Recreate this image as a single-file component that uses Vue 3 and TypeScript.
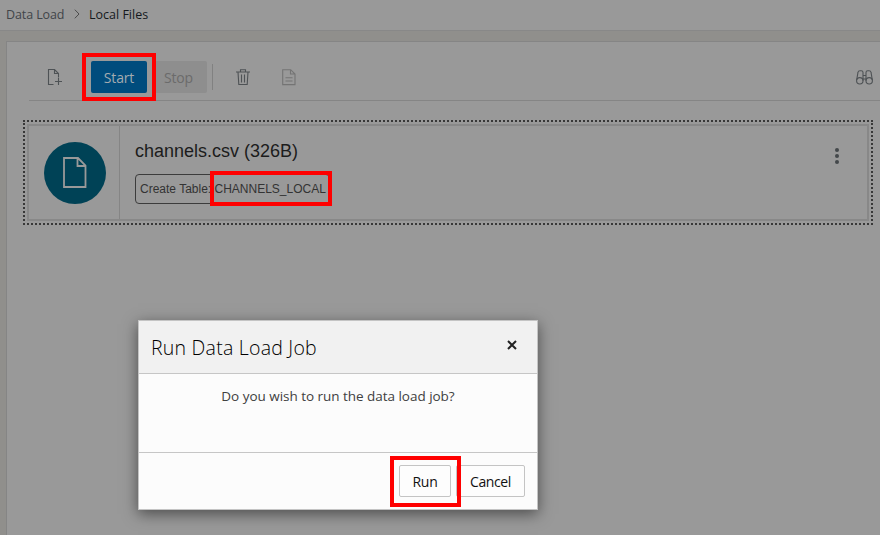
<script setup lang="ts">
import { ref } from 'vue'

interface LoadFile {
  name: string
  size: string
  table: string
}

const file = ref<LoadFile>({ name: 'channels.csv', size: '326B', table: 'CHANNELS_LOCAL' })
</script>

<template>
  <div class="app">
    <nav class="crumbs">
      <span class="crumb">Data Load</span>
      <svg class="chev" width="6" height="10" viewBox="0 0 6 10"><path d="M.8.7 5 5 .8 9.3" /></svg>
      <span class="crumb current">Local Files</span>
    </nav>

    <main class="panel">
      <div class="toolbar">
        <svg class="icon add" width="16" height="18" viewBox="0 0 16 18">
          <path d="M6.5 15.5h-5V.5h6l4 4v4M7.5.5v4h4M11.5 9v7M8 12.5h7" />
        </svg>
        <div class="start-wrap">
          <button class="btn start">Start</button>
          <i class="mark mark-start"></i>
        </div>
        <button class="btn stop">Stop</button>
        <i class="sep"></i>
        <svg class="icon trash" width="14" height="17" viewBox="0 0 14 17">
          <path d="M0 3h14M4.5 3V.8h5V3M2 3l.8 12.5h8.4L12 3M5.5 5.5v8M8.5 5.5v8" />
        </svg>
        <svg class="icon doc" width="14" height="17" viewBox="0 0 14 17">
          <path d="M.7.7h8L13 5v10.6H.7ZM8.5.7V5H13M3.5 8.7h7M3.5 12h7" />
        </svg>
        <svg class="icon bino" width="17" height="15" viewBox="0 0 17 15">
          <circle cx="3.8" cy="10.8" r="3.2" />
          <circle cx="13.2" cy="10.8" r="3.2" />
          <path d="M.7 10 2 2.2Q2.2.7 4 .7h1.3Q7 .7 7 2.4v8.4M16.3 10 15 2.2Q14.8.7 13 .7h-1.3Q10 .7 10 2.4v8.4M7 5.5h3M7 9h3" />
        </svg>
      </div>

      <section class="focus">
        <div class="card">
          <div class="thumb">
            <div class="disc">
              <svg width="24" height="31" viewBox="0 0 24 31">
                <path d="M1 1h14l7.5 7.5V30H1ZM14.5 1v8h8" />
              </svg>
            </div>
          </div>
          <div class="info">
            <h2 class="name">{{ file.name }} ({{ file.size }})</h2>
            <div class="chip">
              <span>Create Table: {{ file.table }}</span>
              <i class="mark mark-table"></i>
            </div>
          </div>
          <div class="more"><i></i><i></i><i></i></div>
        </div>
      </section>
    </main>

    <div class="dialog" role="dialog">
      <header class="d-head">
        <h1 class="d-title">Run Data Load Job</h1>
        <svg class="close" width="10" height="10" viewBox="0 0 10 10"><path d="m1 1 8 8M9 1 1 9" /></svg>
      </header>
      <div class="d-body"><span class="question">Do you wish to run the data load job?</span></div>
      <footer class="d-foot">
        <div class="run-wrap">
          <button class="d-btn run">Run</button>
          <i class="mark mark-run"></i>
        </div>
        <button class="d-btn cancel">Cancel</button>
      </footer>
    </div>
  </div>
</template>

<style>
body { margin: 0; overflow: hidden; }
</style>

<style scoped>
* { box-sizing: border-box; }
.app {
  position: relative;
  width: 880px;
  height: 535px;
  overflow: hidden;
  display: flex;
  flex-direction: column;
  background: #908f8c;
  font-family: "Open Sans", "Noto Sans", sans-serif;
}
button { font-family: inherit; padding: 0; margin: 0; white-space: nowrap; }
svg { fill: none; flex: none; display: block; }
.crumbs {
  height: 31px;
  flex: none;
  display: flex;
  align-items: center;
  padding: 0 0 2px 6px;
  background: #999;
  border-bottom: 1px solid #888;
  font-size: 12.5px;
  color: #414549;
}
.crumb { width: 59px; white-space: nowrap; letter-spacing: -.1px; }
.current { color: #15191d; letter-spacing: 0; width: 70px; }
.chev { margin: 0 9px 0 9px; stroke: #4c4c4c; }
.panel {
  flex: 1;
  margin: 10px 0 0 6px;
  background: #999;
  border: solid #858585;
  border-width: 1px 0 0 1px;
  padding-left: 16px;
}
.toolbar {
  height: 59px;
  margin-left: 6px;
  padding: 0 7px 0 18px;
  display: flex;
  align-items: center;
  border-bottom: 1px solid #858585;
  margin-bottom: 19px;
}
.icon { stroke: #4e5255; stroke-width: 1.1; }
.start-wrap, .run-wrap { position: relative; }
.start-wrap { margin: 12px 0 0 28px; height: 32px; }
.icon.add { margin-top: 13px; }
.btn { height: 32px; border: 0; border-radius: 2px; font-size: 14px; letter-spacing: -.15px; display: block; }
.start { width: 56px; background: #004c7d; color: #a3abb0; padding-top: 1px; }
.stop { width: 52px; margin: 12px 0 0 8px; background: #8e8e8e; color: #6b6b6b; padding: 1px 5px 0 0; }
.sep { width: 1px; height: 26px; background: #818181; margin: 12px 0 0 5px; }
.trash { margin: 13px 0 0 23px; }
.doc { margin: 13px 0 0 32px; stroke: #747474; }
.bino { margin: 13px 0 0 auto; }
.mark { position: absolute; border: 4px solid #f00; z-index: 2; }
.mark-start { left: -9px; top: -8px; width: 74px; height: 48px; }
.focus { width: 850px; height: 105px; border: 2px dotted #383838; padding: 2px; }
.card { height: 97px; width: 842px; border: 2px solid #888; display: flex; }
.thumb { width: 91px; padding-left: 2px; border-right: 1px solid #858585; display: flex; align-items: center; justify-content: center; flex: none; }
.disc { width: 62px; height: 62px; border-radius: 50%; background: #004256; display: flex; align-items: center; justify-content: center; }
.disc svg { stroke: #999; stroke-width: 1.8; }
.info { padding: 15px 0 0 15px; font-family: "Liberation Sans", Arial, sans-serif; }
.name { margin: 0; font-size: 18px; font-weight: 400; line-height: 20px; color: #1c1c1c; white-space: nowrap; }
.chip {
  position: relative;
  margin-top: 13px;
  width: 195px;
  height: 30px;
  padding-left: 4px;
  border: 1px solid #3c3c3c;
  border-radius: 4px;
  font-size: 12px;
  line-height: 28px;
  color: #333;
  white-space: nowrap;
}
.mark-table { left: 74px; top: -4px; width: 122px; height: 35px; }
.more { margin: 22px 28px 0 auto; display: flex; flex-direction: column; gap: 2px; }
.more i { width: 4px; height: 4px; border-radius: 50%; background: #44484b; }
.dialog {
  position: absolute;
  left: 138px;
  top: 320px;
  width: 400px;
  height: 190px;
  display: flex;
  flex-direction: column;
  background: #fcfcfc;
  border: 1px solid #c4c4c4;
  box-shadow: 0 4px 14px rgba(0, 0, 0, .5);
}
.d-head {
  height: 53px;
  flex: none;
  display: flex;
  align-items: center;
  justify-content: space-between;
  padding: 0 20px 0 12px;
  background: #f1f1f1;
  border-bottom: 1px solid #c6c6c6;
}
.d-title { margin: 1px 0 0; font-size: 19.5px; font-weight: 300; color: #000; letter-spacing: .23px; white-space: nowrap; }
.close { stroke: #222; stroke-width: 2; margin-bottom: 4px; }
.d-body { flex: 1; padding-top: 13px; text-align: center; font-size: 13.5px; line-height: 19px; color: #404040; }
.question { white-space: nowrap; letter-spacing: -.03px; }
.d-foot {
  height: 57px;
  flex: none;
  border-top: 1px solid #c6c6c6;
  padding: 12px 12px 0;
  display: flex;
  justify-content: flex-end;
  gap: 5px;
}
.d-btn { height: 32px; background: #fdfdfd; border: 1px solid #c4c4c4; border-radius: 2px; font-size: 14px; color: #111; display: block; padding-top: 1px; }
.run { width: 52px; letter-spacing: -.2px; }
.cancel { width: 69px; letter-spacing: -.4px; }
.mark-run { left: -9px; top: -9px; width: 71px; height: 51px; }
</style>
